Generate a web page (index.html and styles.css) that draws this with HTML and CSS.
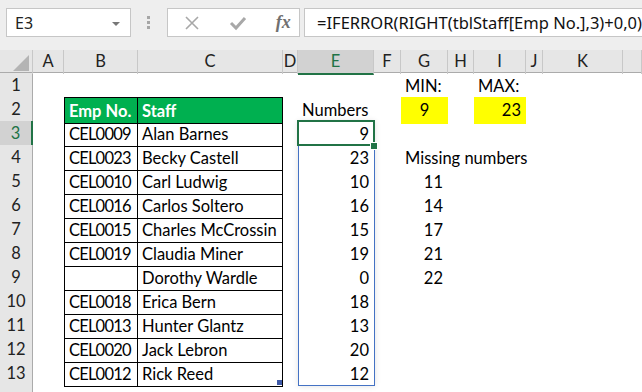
FILE: index.html
```html
<!DOCTYPE html>
<html lang="en">
  <head>
    <meta charset="UTF-8" />
    <meta name="viewport" content="width=device-width, initial-scale=1.0" />
    <title>Missing numbers</title>
    <link rel="stylesheet" href="styles.css">
  </head>
  <body>
    <div class="toolbar">
      <div class="namebox">
        <span>E3</span>
        <span class="caret"></span>
      </div>
      <div class="grip"><i></i><i></i><i></i></div>
      <div class="fxbox">
        <svg class="ico" width="16" height="16" viewBox="0 0 16 16">
          <path d="M2 2 L14 14 M14 2 L2 14" stroke="#a8a8a8" stroke-width="1.6" fill="none" />
        </svg>
        <svg class="ico" width="18" height="16" viewBox="0 0 18 16">
          <path d="M2 8 L7 13 L16 3" stroke="#a8a8a8" stroke-width="3" fill="none" />
        </svg>
        <span class="fx">fx</span>
      </div>
      <div class="formula">=IFERROR(RIGHT(tblStaff[Emp No.],3)+0,0)</div>
    </div>

    <div class="sheet">
      <div class="row head">
        <div class="corner"><span class="tri"></span></div>
        <div class="ch">A</div>
        <div class="ch">B</div>
        <div class="ch">C</div>
        <div class="ch">D</div>
        <div class="ch sel">E</div>
        <div class="ch">F</div>
        <div class="ch">G</div>
        <div class="ch">H</div>
        <div class="ch">I</div>
        <div class="ch">J</div>
        <div class="ch">K</div>
        <div class="ch"></div>
      </div>

      <div class="row">
        <div class="rh">1</div>
        <div></div><div></div><div></div><div></div><div></div><div></div>
        <div class="c">MIN:</div>
        <div></div>
        <div class="c">MAX:</div>
        <div></div><div></div><div></div>
      </div>

      <div class="row">
        <div class="rh">2</div>
        <div></div>
        <div class="c t tl th top">Emp No.</div>
        <div class="c t th top">Staff</div>
        <div></div>
        <div class="c">Numbers</div>
        <div></div>
        <div class="c ctr yellow">9</div>
        <div></div>
        <div class="c num yellow">23</div>
        <div></div><div></div><div></div>
      </div>

      <div class="row">
        <div class="rh sel">3</div>
        <div></div>
        <div class="c t tl id">CEL0009</div>
        <div class="c t">Alan Barnes</div>
        <div></div>
        <div class="c num">9</div>
        <div></div><div></div><div></div><div></div><div></div><div></div><div></div>
      </div>

      <div class="row">
        <div class="rh">4</div>
        <div></div>
        <div class="c t tl id">CEL0023</div>
        <div class="c t">Becky Castell</div>
        <div></div>
        <div class="c num">23</div>
        <div></div>
        <div class="c wide">Missing numbers</div>
        <div></div><div></div><div></div><div></div><div></div>
      </div>

      <div class="row">
        <div class="rh">5</div>
        <div></div>
        <div class="c t tl id">CEL0010</div>
        <div class="c t">Carl Ludwig</div>
        <div></div>
        <div class="c num">10</div>
        <div></div>
        <div class="c num">11</div>
        <div></div><div></div><div></div><div></div><div></div>
      </div>

      <div class="row">
        <div class="rh">6</div>
        <div></div>
        <div class="c t tl id">CEL0016</div>
        <div class="c t">Carlos Soltero</div>
        <div></div>
        <div class="c num">16</div>
        <div></div>
        <div class="c num">14</div>
        <div></div><div></div><div></div><div></div><div></div>
      </div>

      <div class="row">
        <div class="rh">7</div>
        <div></div>
        <div class="c t tl id">CEL0015</div>
        <div class="c t">Charles McCrossin</div>
        <div></div>
        <div class="c num">15</div>
        <div></div>
        <div class="c num">17</div>
        <div></div><div></div><div></div><div></div><div></div>
      </div>

      <div class="row">
        <div class="rh">8</div>
        <div></div>
        <div class="c t tl id">CEL0019</div>
        <div class="c t">Claudia Miner</div>
        <div></div>
        <div class="c num">19</div>
        <div></div>
        <div class="c num">21</div>
        <div></div><div></div><div></div><div></div><div></div>
      </div>

      <div class="row">
        <div class="rh">9</div>
        <div></div>
        <div class="c t tl id"></div>
        <div class="c t">Dorothy Wardle</div>
        <div></div>
        <div class="c num">0</div>
        <div></div>
        <div class="c num">22</div>
        <div></div><div></div><div></div><div></div><div></div>
      </div>

      <div class="row">
        <div class="rh">10</div>
        <div></div>
        <div class="c t tl id">CEL0018</div>
        <div class="c t">Erica Bern</div>
        <div></div>
        <div class="c num">18</div>
        <div></div><div></div><div></div><div></div><div></div><div></div><div></div>
      </div>

      <div class="row">
        <div class="rh">11</div>
        <div></div>
        <div class="c t tl id">CEL0013</div>
        <div class="c t">Hunter Glantz</div>
        <div></div>
        <div class="c num">13</div>
        <div></div><div></div><div></div><div></div><div></div><div></div><div></div>
      </div>

      <div class="row">
        <div class="rh">12</div>
        <div></div>
        <div class="c t tl id">CEL0020</div>
        <div class="c t">Jack Lebron</div>
        <div></div>
        <div class="c num">20</div>
        <div></div><div></div><div></div><div></div><div></div><div></div><div></div>
      </div>

      <div class="row">
        <div class="rh">13</div>
        <div></div>
        <div class="c t tl id">CEL0012</div>
        <div class="c t">Rick Reed</div>
        <div></div>
        <div class="c num">12</div>
        <div></div><div></div><div></div><div></div><div></div><div></div><div></div>
      </div>

      <div class="row">
        <div class="rh"></div>
      </div>

      <!-- selection overlays -->
      <div class="range"></div>
      <div class="active"></div>
      <div class="handle"></div>
      <div class="tbl-handle"></div>
    </div>
  </body>
</html>
```

FILE: styles.css
```css
body {
  margin: 0;
  font-family: Lato, "Open Sans", sans-serif;
  color: #000;
  background: #fff;
  overflow: hidden;
}

/* formula bar */
.toolbar {
  height: 50px;
  background: #eeeeee;
  display: flex;
  align-items: flex-start;
  padding-top: 8px;
  box-sizing: border-box;
  position: relative;
}
.namebox {
  margin-left: 6px;
  width: 127px;
  height: 29px;
  box-sizing: border-box;
  background: #fff;
  border: 1px solid #c6c6c6;
  display: flex;
  align-items: center;
  justify-content: space-between;
  padding: 0 10px 0 8px;
  font-family: "Noto Sans", sans-serif;
  font-size: 16px;
  color: #222;
}
.caret {
  width: 0;
  height: 0;
  border-left: 4px solid transparent;
  border-right: 4px solid transparent;
  border-top: 4px solid #777;
  margin-top: 2px;
}
.grip {
  width: 37px;
  display: flex;
  flex-direction: column;
  align-items: center;
  gap: 2px;
  padding-top: 8px;
}
.grip i {
  display: block;
  width: 3px;
  height: 3px;
  background: #a6a6a6;
}
.fxbox {
  width: 136px;
  height: 29px;
  box-sizing: border-box;
  background: #fff;
  border: 1px solid #c6c6c6;
  display: flex;
  align-items: center;
  padding-left: 16px;
  gap: 29px;
}
.fx {
  font-family: "Liberation Serif", serif;
  font-style: italic;
  font-weight: bold;
  font-size: 18px;
  color: #707070;
}
.formula {
  margin-left: 4px;
  flex: 1;
  height: 29px;
  box-sizing: border-box;
  background: #fff;
  border: 1px solid #c6c6c6;
  border-right: none;
  padding-left: 12px;
  font-family: "Noto Sans", sans-serif;
  font-size: 16.5px;
  line-height: 27px;
  white-space: nowrap;
  color: #111;
}

/* grid */
.sheet {
  position: relative;
}
.row {
  display: grid;
  grid-template-columns: 33px 31px 74px 145px 15px 76px 27px 47px 26px 52px 17px 80px 1fr;
  height: 24px;
  font-size: 16.5px;
  line-height: 24px;
}
.row.head {
  height: 23px;
  background: #e6e6e6;
  border-bottom: 1px solid #ababab;
  box-sizing: border-box;
}
.corner {
  position: relative;
  border-right: 1px solid #c8c8c8;
}
.tri {
  position: absolute;
  right: 3px;
  bottom: 3px;
  width: 0;
  height: 0;
  border-left: 16px solid transparent;
  border-bottom: 16px solid #b4b4b4;
}
.ch {
  text-align: center;
  border-right: 1px solid #c8c8c8;
  line-height: 23px;
  color: #222;
}
.ch.sel {
  background: #d2d2d2;
  color: #217346;
  border-bottom: 2px solid #217346;
  margin-bottom: -1px;
}
.rh {
  background: #e6e6e6;
  text-align: center;
  border-right: 1px solid #ababab;
  border-bottom: 1px solid #d4d4d4;
  box-sizing: border-box;
  color: #222;
}
.rh.sel {
  background: #d2d2d2;
  color: #217346;
  border-right: 2px solid #217346;
}

/* cells */
.c {
  padding: 1px 4px 0;
  white-space: nowrap;
  box-sizing: border-box;
}
.c.num {
  text-align: right;
  padding-right: 5px;
}
.c.ctr {
  text-align: center;
}
.c.id {
  letter-spacing: -0.8px;
}
.yellow {
  background: #ffff00;
}
.t {
  border-right: 1px solid #000;
  border-bottom: 1px solid #000;
}
.t.tl {
  border-left: 1px solid #000;
}
.t.top {
  border-top: 1px solid #000;
}
.th {
  background: #00b050;
  color: #fff;
  font-weight: bold;
}

/* overlays */
.range {
  position: absolute;
  left: 298px;
  top: 71px;
  width: 77px;
  height: 265px;
  box-sizing: border-box;
  border: 1px solid #4472c4;
  box-shadow: 0 0 6px rgba(0, 0, 0, 0.12);
}
.active {
  position: absolute;
  left: 297px;
  top: 70px;
  width: 78px;
  height: 26px;
  box-sizing: border-box;
  border: 2px solid #217346;
}
.handle {
  position: absolute;
  left: 370px;
  top: 92px;
  width: 6px;
  height: 6px;
  background: #217346;
  border: 1px solid #fff;
}
.tbl-handle {
  position: absolute;
  left: 277px;
  top: 330px;
  width: 5px;
  height: 5px;
  background: #3f5aa8;
}
```
